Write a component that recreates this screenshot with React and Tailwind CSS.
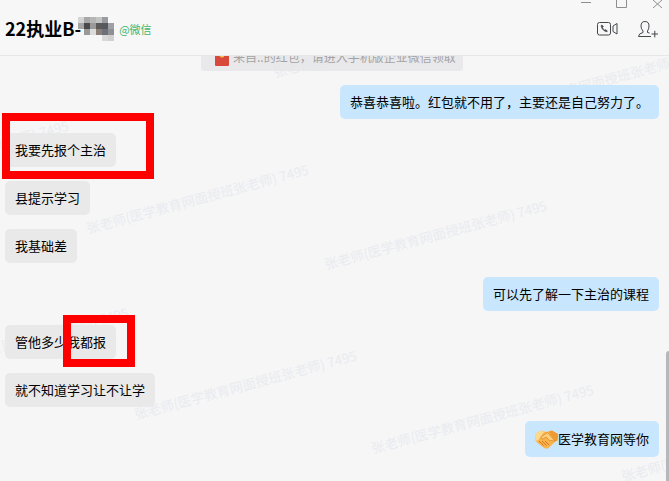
const FONT = "font-['Noto_Sans_CJK_SC','Liberation_Sans',sans-serif]";
const WM = "张老师(医学教育网面授班张老师) 7495";
const marks = [
  [-155, 178],
  [85, 222],
  [272, 66],
  [482, 106],
  [323, 258],
  [-95, 365],
  [133, 408],
  [370, 442],
  [620, 470],
];
const Left = ({ children }) => (
  <div className="self-start h-[34px] px-[10px] flex items-center rounded-[5px] bg-[#e9e9e9] text-[13px] text-black">{children}</div>
);
const Right = ({ children, tall }) => (
  <div className={`self-end ${tall ? "h-[36px]" : "h-[34px]"} px-[10px] flex items-center rounded-[5px] bg-[#c9e6ff] text-[13px] text-black`}>{children}</div>
);
const Handshake = () => (
  <svg width="23" height="19" viewBox="0 0 23 19" className="shrink-0">
    <path d="M0 4 L6 0.5 L11 2 L16 0.5 L23 4 L22.5 10.5 L20 12 L13.5 18 Q11 19.5 8.5 17.5 L2 12.5 L0.5 10.5 Z" fill="#f9b24c" />
    <path d="M0 4 L6 0.5 L9 2 L3 10.5 L0.5 10.5 Z" fill="#fdd98c" />
    <path d="M23 4 L17 0.5 L14 2 L20 11 L22.5 10.5 Z" fill="#ee9a35" />
    <path d="M6 7 L12.5 2.5 L20 11 L14.5 10.5 L11 7 L8 9 Q6 9.5 6 7 Z" fill="#ffcf78" stroke="#d9822b" strokeWidth="0.7" />
    <path d="M4 11 L8.5 15.5 M7 11 L11.5 15.5 M10 11 L14 15" stroke="#d27a25" strokeWidth="1" fill="none" />
  </svg>
);
const Mosaic = () => {
  const cells = [
    [0, 0, "#d4d4d4"], [6, 0, "#a8a8a8"], [12, 0, "#b5b5b5"], [18, 0, "#c4c4c4"], [24, 0, "#999ba0"],
    [0, 6, "#a5a5a5"], [6, 6, "#4a4a4a"], [12, 6, "#9a9a9a"], [18, 6, "#5c5a58"], [24, 6, "#55585e"], [30, 6, "#9ea0a5"],
    [6, 12, "#999"], [12, 12, "#dcdcdc"], [18, 12, "#8a8078"], [24, 12, "#6d7078"], [30, 12, "#8d9095"],
    [24, 18, "#d8d8d8"], [30, 18, "#d0d0d0"],
  ];
  return (
    <svg width="36" height="24" viewBox="0 0 36 24" className="shrink-0 -ml-[3px] mt-[3px]">
      {cells.map(([x, y, c], i) => <rect key={i} x={x} y={y} width="6" height="6" fill={c} />)}
    </svg>
  );
};

export default function App() {
  return (
    <div className={`relative w-[669px] h-[481px] overflow-hidden flex flex-col bg-[#f6f6f6] ${FONT}`}>
      {marks.map(([x, y], i) => (
        <div
          key={i}
          className="absolute pointer-events-none whitespace-nowrap text-[13.4px] leading-none text-[#e9ebf0] origin-top-left -rotate-15"
          style={{ left: x, top: y }}
        >
          {WM}
        </div>
      ))}

      <header className="relative z-10 h-[56px] shrink-0 border-b border-[#e7e7e7] bg-[#f7f7f7] flex items-center pl-[5px] pr-[10px]">
        <span className="text-[18px] font-bold text-black leading-none">22执业B-</span>
        <Mosaic />
        <span className="ml-[5px] mt-[3px] text-[11px] text-[#3fb56a] leading-none">@微信</span>
        <div className="ml-auto flex items-center gap-[20px] mt-[3px]">
          <svg width="21" height="14" viewBox="0 0 21 14" fill="none" stroke="#44474c" strokeWidth="1">
            <rect x="0.5" y="0.5" width="13" height="12.5" rx="2" />
            <path d="M4 3.5 Q4.5 8 9.5 10 L10.5 9 L8.5 7.5 L7.5 8 Q6 7 5.5 5.5 L6.5 4.5 L5 3 Z" fill="#44474c" strokeWidth="0.5" />
            <path d="M20 1.5 L16 4 V9.5 L20 12 Z" />
          </svg>
          <svg width="21" height="17" viewBox="0 0 21 17" fill="none" stroke="#44474c" strokeWidth="1">
            <path d="M0.5 15.5 H13 M0.5 15.5 Q0.5 12.5 5 11.5 V10 Q3 8 3 5 Q3 0.5 7 0.5 Q11 0.5 11 5 Q11 8 9.5 10 V11.5 L11.5 12" />
            <path d="M13.5 13 H20 M16.8 9.8 V16.4" />
          </svg>
        </div>
      </header>

      <div className="absolute top-0 right-0 z-20 flex items-start">
        <svg width="88" height="8" viewBox="0 0 88 8" fill="none" stroke="#8f8f8f" strokeWidth="1">
          <path d="M0 2.5 H10" />
          <path d="M35.5 0 V7.5 H45.5 V0" />
          <path d="M72 0 L81 8 M81 0 L72 8" />
        </svg>
      </div>

      <main className="relative flex-1 min-h-0 overflow-hidden flex flex-col gap-[14px] pl-[5px] pr-[10px]">
        <div className="self-start ml-[196px] -mt-[14px] h-[29px] w-[262px] rounded-[3px] bg-[#e4e4e8]/70 flex items-center pl-[14px] gap-[4px] shrink-0">
          <svg width="14" height="16" viewBox="0 0 14 16" className="shrink-0 mt-[2px]">
            <rect width="14" height="16" rx="1" fill="#d8483b" />
            <circle cx="7" cy="5" r="2.5" fill="#f3c14f" />
          </svg>
          <span className="text-[12px] text-[#a3a3a3] whitespace-nowrap">来自..的红包，请进入手机版企业微信领取</span>
        </div>
        <Right>恭喜恭喜啦。红包就不用了，主要还是自己努力了。</Right>
        <Left>我要先报个主治</Left>
        <Left>县提示学习</Left>
        <Left>我基础差</Left>
        <Right>可以先了解一下主治的课程</Right>
        <Left>管他多少我都报</Left>
        <Left>就不知道学习让不让学</Left>
        <Right tall>
          <Handshake />
          <span>医学教育网等你</span>
        </Right>
      </main>

      <div className="absolute z-20 border-[8px] border-[#ff0000] left-[2px] top-[113px] w-[152px] h-[66px]" />
      <div className="absolute z-20 border-[8px] border-[#ff0000] left-[63px] top-[315px] w-[72px] h-[52px]" />
      <div className="absolute z-20 right-0 top-[351px] w-[3px] h-[130px] rounded-tl-[3px] bg-[#b7b7bb]" />
    </div>
  );
}
